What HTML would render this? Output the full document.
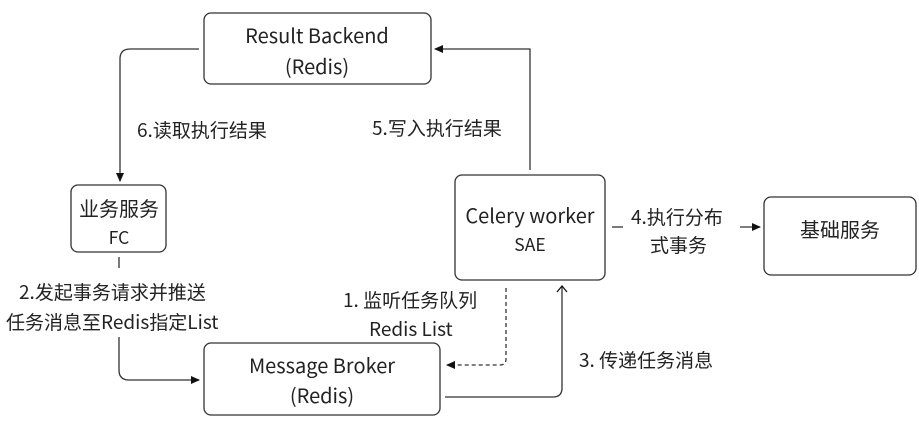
<!DOCTYPE html>
<html><head><meta charset="utf-8"><style>
html,body{margin:0;padding:0;background:#fff;}
svg text{font-family:"Noto Sans CJK SC","Liberation Sans",sans-serif;fill:#222;}
</style></head><body>
<svg width="919" height="430" viewBox="0 0 919 430" xmlns="http://www.w3.org/2000/svg">
<defs>
<marker id="a" markerWidth="10" markerHeight="10" refX="8" refY="5" orient="auto" markerUnits="userSpaceOnUse"><path d="M0,1 L9,5 L0,9 Z" fill="#111"/></marker>
<marker id="o" markerWidth="12" markerHeight="12" refX="6" refY="2" orient="0" markerUnits="userSpaceOnUse"><path d="M1,8 L6,2 L11,8" fill="none" stroke="#111" stroke-width="1.3"/></marker>
</defs>
<g fill="none" stroke="#333" stroke-width="1.3">
<rect x="204" y="13" width="227" height="71" rx="7"/>
<rect x="71" y="185" width="95" height="67" rx="7"/>
<rect x="455" y="175" width="150" height="105" rx="7"/>
<rect x="764" y="197" width="152" height="78" rx="7"/>
<rect x="204" y="343" width="236" height="72" rx="7"/>
</g>
<g fill="none" stroke="#333" stroke-width="1.3">
<path d="M199,49 H130 Q120,49 120,59 V181" marker-end="url(#a)"/>
<path d="M530,170 V49 H435" marker-end="url(#a)"/>
<path d="M119,257 V268"/>
<path d="M119,337 V370 Q119,380 129,380 H199" marker-end="url(#a)"/>
<path d="M612,227 H623"/>
<path d="M740,227 H760" marker-end="url(#a)"/>
<path d="M506,288 V359 Q506,365 500,365 H447" stroke-dasharray="4,3" marker-end="url(#a)"/>
<path d="M445,397 H553 Q562,397 562,388 V286" marker-end="url(#o)"/>
</g>
<g font-size="20" text-anchor="middle">
<text x="317" y="43">Result Backend</text>
<text x="317" y="74">(Redis)</text>
<text x="119" y="216">业务服务</text>
<text x="119" y="244" font-size="17.5">FC</text>
<text x="530" y="223">Celery worker</text>
<text x="530" y="251" font-size="17.5">SAE</text>
<text x="840" y="237">基础服务</text>
<text x="322" y="373">Message Broker</text>
<text x="322" y="403">(Redis)</text>
</g>
<g font-size="19">
<text x="137" y="137">6.读取执行结果</text>
<text x="372" y="135">5.写入执行结果</text>
<text x="631" y="224">4.执行分布</text>
<text x="650" y="252">式事务</text>
<text x="19" y="299">2.发起事务请求并推送</text>
<text x="6" y="329">任务消息至Redis指定List</text>
<text x="343" y="307">1. 监听任务队列</text>
<text x="369" y="336">Redis List</text>
<text x="579" y="367">3. 传递任务消息</text>
</g>
</svg>
</body></html>
